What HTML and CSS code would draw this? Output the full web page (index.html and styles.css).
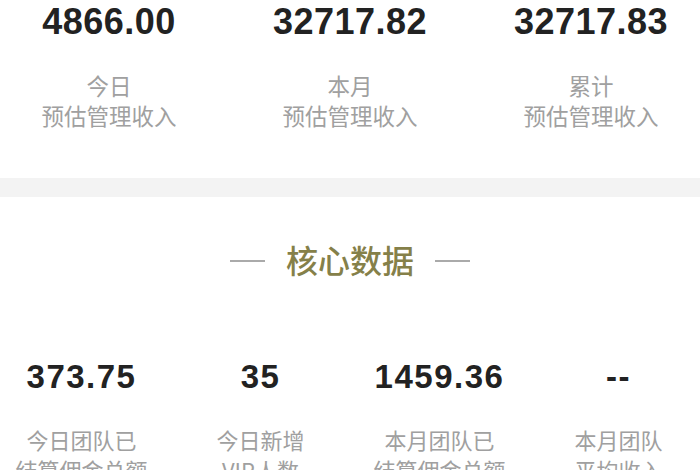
FILE: index.html
```html
<!DOCTYPE html>
<html lang="zh-CN">
<head>
<meta charset="utf-8">
<title>核心数据</title>
<link rel="stylesheet" href="styles.css">
</head>
<body>
<div class="page">
  <section class="summary">
    <div class="stat">
      <div class="value">4866.00</div>
      <div class="label">今日<br>预估管理收入</div>
    </div>
    <div class="stat">
      <div class="value">32717.82</div>
      <div class="label">本月<br>预估管理收入</div>
    </div>
    <div class="stat">
      <div class="value">32717.83</div>
      <div class="label">累计<br>预估管理收入</div>
    </div>
  </section>
  <div class="band"></div>
  <section class="core">
    <h2 class="title"><span class="dash"></span><span class="title-text">核心数据</span><span class="dash"></span></h2>
    <div class="core-grid">
      <div class="stat">
        <div class="value small">373.75</div>
        <div class="label">今日团队已<br>结算佣金总额</div>
      </div>
      <div class="stat">
        <div class="value small">35</div>
        <div class="label">今日新增<br>VIP人数</div>
      </div>
      <div class="stat">
        <div class="value small">1459.36</div>
        <div class="label">本月团队已<br>结算佣金总额</div>
      </div>
      <div class="stat">
        <div class="value small">--</div>
        <div class="label">本月团队<br>平均收入</div>
      </div>
    </div>
  </section>
</div>
</body>
</html>
```

FILE: styles.css
```css
html, body {
  margin: 0;
  padding: 0;
  background: #ffffff;
}

.page {
  width: 700px;
  height: 470px;
  overflow: hidden;
  font-family: "Noto Sans CJK SC", "Noto Sans", sans-serif;
}

.summary {
  display: grid;
  grid-template-columns: repeat(3, 241px);
  justify-content: center;
  padding-top: 4px;
  padding-bottom: 48px;
}

.stat {
  display: flex;
  flex-direction: column;
  align-items: center;
  text-align: center;
}

.value {
  font-family: "Liberation Sans", Arial, sans-serif;
  font-weight: bold;
  font-size: 36px;
  line-height: 36px;
  letter-spacing: 0.5px;
  color: #222222;
}

.value.small {
  font-size: 33px;
  line-height: 33px;
  letter-spacing: 1.5px;
}

.label {
  margin-top: 30px;
  font-size: 22.5px;
  line-height: 30px;
  color: #a0a0a0;
  white-space: nowrap;
}

.core-grid .label {
  margin-top: 31px;
  font-size: 22px;
}

.band {
  height: 19px;
  background: #f3f3f3;
}

.core {
  padding-top: 42px;
}

.title {
  margin: 0;
  display: flex;
  justify-content: center;
  align-items: center;
  gap: 21px;
  height: 40px;
}

.title-text {
  font-size: 32px;
  line-height: 40px;
  font-weight: 500;
  color: #858049;
}

.dash {
  width: 35px;
  height: 2px;
  background: #aaaaaa;
  margin-top: 4px;
}

.core-grid {
  display: grid;
  grid-template-columns: repeat(4, 179px);
  justify-content: center;
  margin-top: 81px;
}
```
